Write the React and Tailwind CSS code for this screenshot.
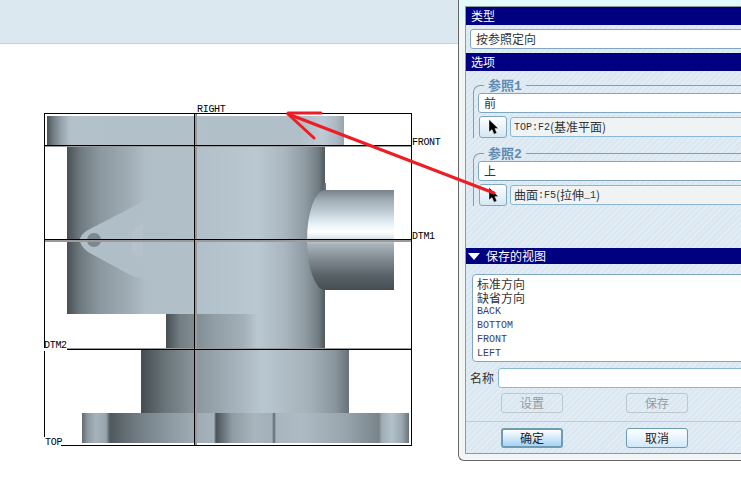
import React from "react";

const cjk = "font-['Noto_Sans_CJK_SC',sans-serif]";
const mono = "font-['Liberation_Mono','Noto_Sans_CJK_SC',monospace]";

const gradients = {
  flange: [[47, "#454e53"], [52, "#6b767c"], [62, "#98a5ad"], [70, "#b3c1cb"], [300, "#b1bfc9"], [322, "#bdcbd5"], [336, "#adbac3"], [344, "#98a4ac"]],
  body: [[67, "#475055"], [80, "#6e797f"], [100, "#8c989f"], [130, "#a0adb5"], [146, "#b0bec8"], [200, "#b2c0ca"], [258, "#bac8d2"], [285, "#a9b6bf"], [305, "#8f9ba2"], [318, "#727d83"], [325, "#50595e"]],
  neck: [[166, "#454e53"], [180, "#737e84"], [215, "#929ea5"], [244, "#a3b0b8"], [258, "#bac8d2"], [285, "#a9b6bf"], [305, "#8f9ba2"], [318, "#727d83"], [325, "#50595e"]],
  lower: [[141, "#454d52"], [165, "#697479"], [195, "#8a969d"], [240, "#a8b5be"], [262, "#b9c7d1"], [310, "#a4b1b9"], [335, "#8a959c"], [349, "#687278"]],
  base: [[82, "#626c71"], [88, "#8f9ba2"], [96, "#a6b3bb"], [106, "#99a5ad"], [110, "#4f585d"], [135, "#6f7a80"], [170, "#8d9aa2"], [194, "#9fabb3"], [214, "#a6b3bc"], [216, "#4a5358"], [232, "#8f9ba2"], [255, "#a9b6bf"], [272, "#a3b0b8"], [274, "#5c666b"], [276, "#a8b5bf"], [300, "#aebbc5"], [345, "#99a5ad"], [379, "#79848a"], [382, "#a0adb5"], [392, "#b3c1cb"], [402, "#9aa6ae"], [409, "#69737a"]],
};

const pipeStops = [[190, "#77828a"], [200, "#a0adb5"], [212, "#bfcdd7"], [224, "#e8f1f7"], [232, "#ffffff"], [238, "#dfe7ec"], [244, "#a9b4bb"], [260, "#7e898f"], [275, "#5a6368"], [290, "#454d52"]];

function Grad({ id, stops, vertical }) {
  const a = stops[0][0];
  const b = stops[stops.length - 1][0];
  return (
    <linearGradient
      id={id}
      gradientUnits="userSpaceOnUse"
      x1={vertical ? 0 : a}
      x2={vertical ? 0 : b}
      y1={vertical ? a : 0}
      y2={vertical ? b : 0}
    >
      {stops.map(([p, c]) => (
        <stop key={p} offset={(p - a) / (b - a)} stopColor={c} />
      ))}
    </linearGradient>
  );
}

function Label({ x, y, children }) {
  return (
    <text x={x} y={y} fontFamily="Liberation Mono, monospace" fontSize="10" letterSpacing="-0.3" fill="#000">
      {children}
    </text>
  );
}

function Drawing() {
  return (
    <svg width="458" height="437" viewBox="0 44 458 437" className="block" shapeRendering="geometricPrecision">
      <defs>
        {Object.entries(gradients).map(([k, v]) => (
          <Grad key={k} id={k} stops={v} />
        ))}
        <Grad id="pipe" stops={pipeStops} vertical />
      </defs>

      {/* part */}
      <rect x="47" y="116" width="297" height="30" fill="url(#flange)" />
      <rect x="67" y="146" width="258" height="168" fill="url(#body)" />
      <path d="M325 190 A18 50 0 0 0 325 290 L394 290 L394 190 Z" fill="url(#pipe)" />
      <rect x="324" y="183" width="2" height="8" fill="#6a747a" />
      <path d="M146 200 L88 230 Q80 235 80 240 Q80 246 88 252 L130 275 L146 280 Z" fill="#b0bec8" />
      <path d="M143 223 Q133 226 132 236 L132 250 Q134 255 143 257 Z" fill="#b5c2cc" />
      <circle cx="94" cy="240" r="7" fill="#7c878e" />
      <rect x="166" y="314" width="159" height="34" fill="url(#neck)" />
      <rect x="141" y="350" width="208" height="63" fill="url(#lower)" />
      <rect x="82" y="413" width="327" height="30" fill="url(#base)" />

      {/* datum planes */}
      <g shapeRendering="crispEdges">
        <rect x="195" y="114" width="2" height="331" fill="#9a9a9a" />
        <rect x="45" y="146" width="366" height="1" fill="#9a9a9a" />
        <rect x="45" y="240" width="366" height="2" fill="#9a9a9a" />
        <rect x="67" y="348" width="344" height="1" fill="#9a9a9a" />
        <rect x="44" y="113" width="368" height="1" fill="#000" />
        <rect x="44" y="113" width="1" height="235" fill="#000" />
        <rect x="44" y="351" width="1" height="86" fill="#000" />
        <rect x="411" y="113" width="1" height="333" fill="#000" />
        <rect x="45" y="145" width="366" height="1" fill="#000" />
        <rect x="45" y="239" width="366" height="1" fill="#000" />
        <rect x="67" y="349" width="345" height="1" fill="#000" />
        <rect x="61" y="445" width="351" height="1" fill="#000" />
        <rect x="194" y="113" width="1" height="333" fill="#000" />
      </g>
      <Label x={197} y={112}>RIGHT</Label>
      <Label x={412} y={145}>FRONT</Label>
      <Label x={412} y={239}>DTM1</Label>
      <Label x={44} y={348}>DTM2</Label>
      <Label x={45} y={445}>TOP</Label>
    </svg>
  );
}

function SectionHead({ children, className = "" }) {
  return (
    <div className={`flex items-center bg-[#000080] text-white text-[12px] leading-none pl-[5px] ${cjk} ${className}`}>
      {children}
    </div>
  );
}

function Field({ children, className = "" }) {
  return (
    <div className={`flex items-center h-[20px] bg-white border border-[#7fa8c0] rounded-l-[3px] pl-[5px] mr-[-12px] text-[12px] text-[#333] ${cjk} ${className}`}>
      {children}
    </div>
  );
}

function Cursor() {
  return (
    <svg width="11" height="16" viewBox="0 0 11 16">
      <path d="M1 0.5 L1 13 L4 10.6 L6 15.2 L8.8 14 L6.9 9.6 L10.4 9.6 Z" fill="#000" stroke="#fff" strokeWidth="0.4" />
    </svg>
  );
}

function PickRow({ children }) {
  return (
    <div className="flex items-center mt-[3px] ml-[5px]">
      <button className="flex items-center justify-center w-[28px] h-[22px] border border-[#7fa8c0] rounded-[3px] bg-gradient-to-b from-white to-[#d5e7f3]">
        <Cursor />
      </button>
      <div className={`flex-1 flex items-center h-[20px] ml-[3px] mr-[-12px] pl-[3px] bg-[#eff3f4] border border-[#8ab8d4] rounded-l-[3px] text-[12px] text-[#333] ${cjk}`}>
        {children}
      </div>
    </div>
  );
}

function Group({ title, num, value, className = "", children }) {
  return (
    <fieldset className={`ml-[7px] mr-[-12px] border-t border-l border-[#7f9fb6] rounded-tl-[7px] ${className}`}>
      <legend className={`ml-[10px] px-[4px] h-[14px] text-[13px] leading-[14px] font-bold text-[#5f8ab3] ${cjk}`}>
        {title}
        <span className="font-['Liberation_Mono',monospace]">{num}</span>
      </legend>
      <Field className="mt-[1px] ml-[4px] mr-0">{value}</Field>
      <PickRow>{children}</PickRow>
    </fieldset>
  );
}

function Btn({ children, variant = "normal", className = "" }) {
  const styles = {
    normal: "border border-[#6d9ab5] bg-gradient-to-b from-white to-[#cfe8fa] text-[#222]",
    primary: "border-2 border-[#6f9bb5] bg-gradient-to-b from-white to-[#a5d3f5] text-[#222]",
    disabled: "border border-[#bcc8cc] text-[#9a9a9a]",
  };
  return (
    <button className={`w-[62px] h-[20px] flex items-center justify-center rounded-[3px] text-[12px] leading-none ${cjk} ${styles[variant]} ${className}`}>
      {children}
    </button>
  );
}

function Latin({ children }) {
  return <span className="font-['Liberation_Mono',monospace] text-[10px]">{children}</span>;
}

function SavedViews() {
  const rows = ["BACK", "BOTTOM", "FRONT", "LEFT"];
  return (
    <div className={`ml-[6px] mr-[-12px] mt-[10px] h-[88px] pt-[2px] pl-[4px] bg-white border border-[#7fa8c0] rounded-l-[4px] overflow-hidden text-[12px] leading-[14px] text-[#333] ${cjk}`}>
      <div>标准方向</div>
      <div>缺省方向</div>
      {rows.map((r) => (
        <div key={r} className={`${mono} text-[10px] text-[#34406a]`}>
          {r}
        </div>
      ))}
    </div>
  );
}

export default function App() {
  return (
    <div className="relative flex w-[741px] h-[481px] overflow-hidden bg-white">
      {/* model window */}
      <div className="w-[458px] shrink-0">
        <div className="h-[44px] bg-[#dbe8f0] border-b border-[#c3d3dc]" />
        <Drawing />
      </div>

      {/* dialog */}
      <div className="w-[283px] h-[461px] pl-[6px] pt-[6px] pb-[6px] border-l border-b border-[#666] rounded-bl-[6px] overflow-hidden bg-gradient-to-b from-[#e2fafa] from-[3%] to-[#f3f6f6] to-[6%]">
        <div className="h-[448px] border-l border-t border-b border-[#8c9a9c] bg-[repeating-linear-gradient(135deg,#dbe7f0_0px,#dbe7f0_2px,#e1ecf4_2px,#e1ecf4_4px)]">
          <SectionHead className="h-[18px]">类型</SectionHead>
          <Field className="mt-[4px] ml-[4px]">按参照定向</Field>
          <SectionHead className="h-[18px] mt-[4px]">选项</SectionHead>

          <Group title="参照" num="1" value="前" className="mt-[7px]">
            <Latin>TOP:F2</Latin>
            (基准平面)
          </Group>
          <Group title="参照" num="2" value="上" className="mt-[8px]">
            曲面<Latin>:F5</Latin>(拉伸<Latin>_1</Latin>)
          </Group>

          <SectionHead className="h-[16px] mt-[42px] !pl-[2px]">
            <svg width="12" height="7" viewBox="0 0 12 7" className="mr-[6px]">
              <path d="M0 0 L12 0 L6 7 Z" fill="#fff" />
            </svg>
            保存的视图
          </SectionHead>
          <SavedViews />

          <div className="flex items-center mt-[6px] ml-[4px]">
            <span className={`w-[24px] text-[12px] text-[#333] ${cjk}`}>名称</span>
            <div className="flex-1 h-[20px] ml-[4px] mr-[-12px] bg-white border border-[#8ab8d4] rounded-l-[3px]" />
          </div>

          <div className="flex gap-[63px] mt-[5px] ml-[35px]">
            <Btn variant="disabled">设置</Btn>
            <Btn variant="disabled">保存</Btn>
          </div>

          <div className="h-px mt-[8px] bg-[#c0ccd4]" />

          <div className="flex gap-[63px] mt-[6px] ml-[35px]">
            <Btn variant="primary">确定</Btn>
            <Btn>取消</Btn>
          </div>
        </div>
      </div>

      {/* red annotation over everything */}
      <svg width="741" height="481" className="absolute inset-0 pointer-events-none">
        <g stroke="#ee1c25" strokeWidth="3" fill="none" strokeLinecap="round">
          <path d="M288 114 L494 193" />
          <path d="M288 114 L314 138" />
          <path d="M288 113 L321 113" />
        </g>
      </svg>
    </div>
  );
}
